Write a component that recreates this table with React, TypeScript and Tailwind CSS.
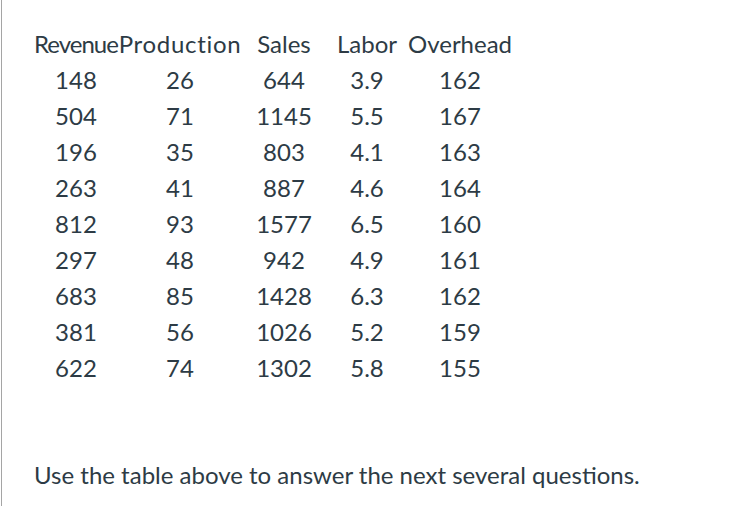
const headers = [
  { label: 'Revenue', cls: 'tracking-[-1px]' },
  { label: 'Production', cls: 'tracking-[0.7px]' },
  { label: 'Sales', cls: '' },
  { label: 'Labor', cls: '' },
  { label: 'Overhead', cls: '' },
];

const rows = [
  ['148', '26', '644', '3.9', '162'],
  ['504', '71', '1145', '5.5', '167'],
  ['196', '35', '803', '4.1', '163'],
  ['263', '41', '887', '4.6', '164'],
  ['812', '93', '1577', '6.5', '160'],
  ['297', '48', '942', '4.9', '161'],
  ['683', '85', '1428', '6.3', '162'],
  ['381', '56', '1026', '5.2', '159'],
  ['622', '74', '1302', '5.8', '155'],
];

export default function App() {
  return (
    <div className="w-[742px] h-[506px] bg-white">
      <div className="ml-px h-full border-l border-[#a5a5a5] pl-[32px] pt-[26px] text-[24px] text-[#2d3b45] font-['Lato','Liberation_Sans',sans-serif]">
        {/* data table */}
        <div className="grid grid-cols-[84px_124px_84px_82px_104px]">
          {headers.map((h) => (
            <div key={h.label} className={`h-[36px] leading-[36px] text-center whitespace-nowrap ${h.cls}`}>
              {h.label}
            </div>
          ))}
          {rows.map((row, i) =>
            row.map((cell, j) => (
              <div key={`${i}-${j}`} className="h-[36px] leading-[36px] text-center">
                {cell}
              </div>
            ))
          )}
        </div>
        <p className="mt-[74px] leading-[30px]">Use the table above to answer the next several questions.</p>
      </div>
    </div>
  );
}
